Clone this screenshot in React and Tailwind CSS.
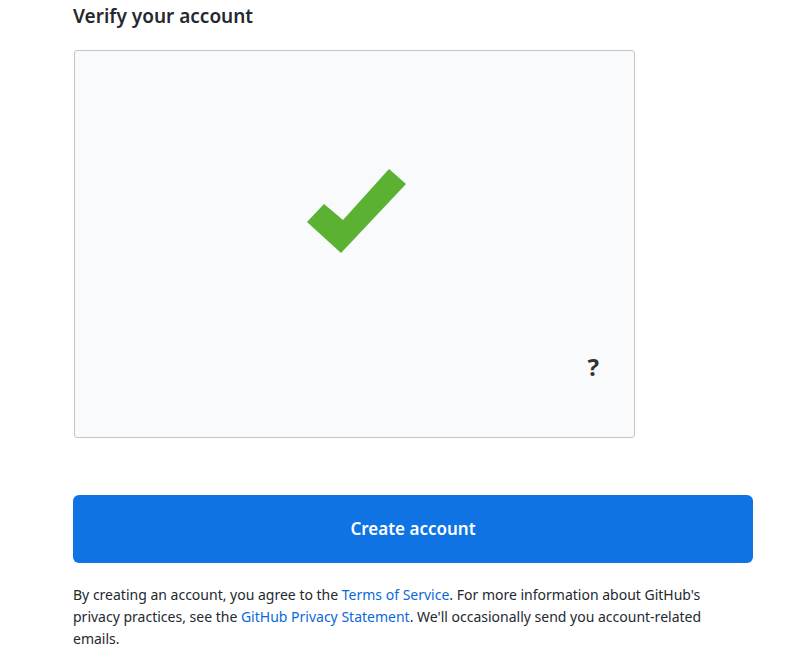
export default function App() {
  return (
    <div
      className="min-h-[652px] bg-white text-[#24292f]"
      style={{ fontFamily: '"Noto Sans", "Open Sans", sans-serif' }}
    >
      <div className="w-[680px] ml-[73px] pt-[3px]">
        <h2 className="text-[19px] font-semibold leading-[26px] text-[#24292f]">Verify your account</h2>

        {/* captcha frame */}
        <div className="mt-[21px] ml-px w-[561px] h-[388px] border border-[#c6c6c6] rounded-[3px] bg-[#f9fafb] flex flex-col">
          <div className="flex justify-center pt-[117px] pl-[3px]">
            <svg width="101" height="86" viewBox="306 168 101 86">
              <polygon points="307,222 324,204 343,220 389,169 406,184 341,253" fill="#5bb132" />
            </svg>
          </div>
          <div className="flex justify-end pr-[35px] mt-[101px]">
            <span className="text-[24px] font-bold leading-none text-[#333]">?</span>
          </div>
        </div>

        <button className="mt-[57px] w-[680px] h-[68px] rounded-md bg-[#0f73e4] text-white text-[17px] font-semibold">
          Create account
        </button>

        <p className="mt-[21px] w-[660px] text-[14px] leading-[22px] text-[#24292f]">
          By creating an account, you agree to the{' '}
          <a className="text-[#0969da]">Terms of Service</a>. For more information about GitHub's
          privacy practices, see the <a className="text-[#0969da]">GitHub Privacy Statement</a>. We'll
          occasionally send you account-related emails.
        </p>
      </div>
    </div>
  );
}
